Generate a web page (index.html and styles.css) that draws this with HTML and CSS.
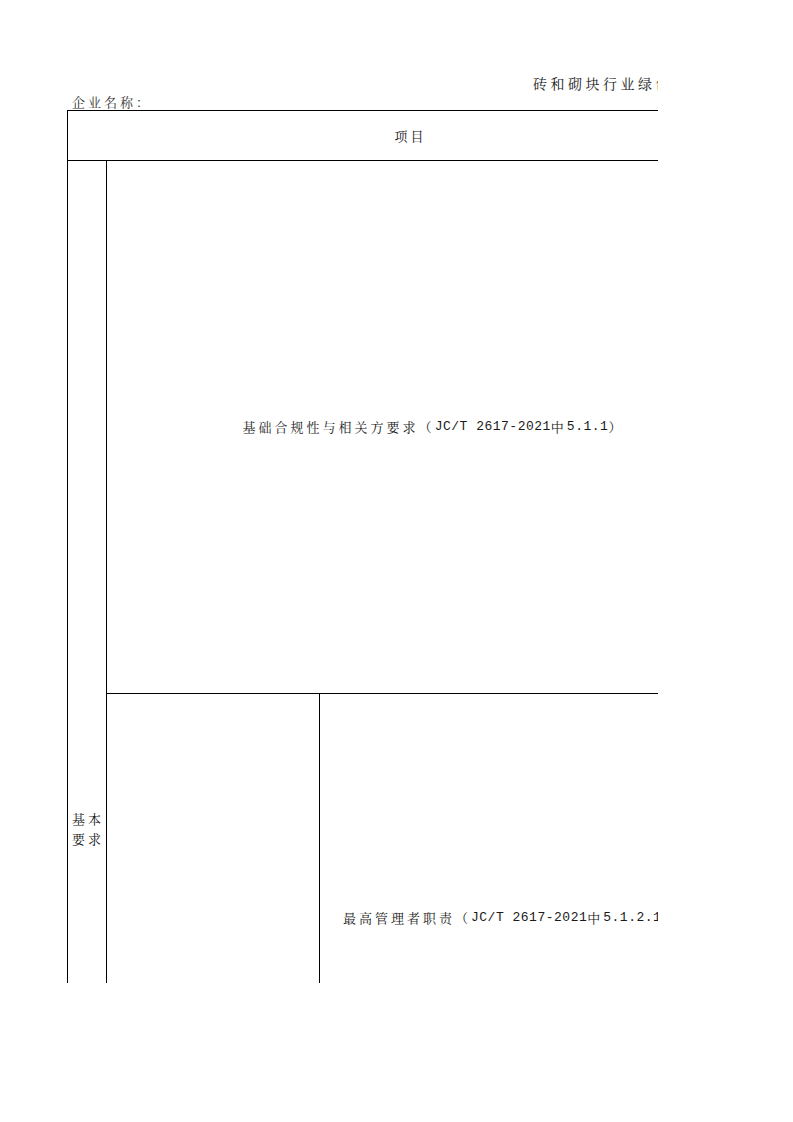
FILE: index.html
```html
<!DOCTYPE html>
<html lang="zh-CN">
<head>
<meta charset="utf-8">
<title>砖和砌块行业绿色工厂评价</title>
<link rel="stylesheet" href="styles.css">
</head>
<body>
<div class="page">
  <div class="title">砖和砌块行业绿色工厂评价要求自评表</div>
  <div class="company">企业名称：</div>
  <div class="sheet">
    <div class="cell head">项目</div>
    <div class="cell side">基本<br>要求</div>
    <div class="cell basic">基础合规性与相关方要求（<span class="lat">JC/T 2617-2021</span>中<span class="lat">5.1.1</span>）</div>
    <div class="cell blank"></div>
    <div class="cell duty">最高管理者职责（<span class="lat">JC/T 2617-2021</span>中<span class="lat">5.1.2.1-5.1.2.2</span>）</div>
    <div class="cell next-a"></div>
    <div class="cell next-b"></div>
  </div>
</div>
</body>
</html>
```

FILE: styles.css
```css
html, body {
  margin: 0;
  padding: 0;
  background: #fff;
}
.page {
  width: 658px;
  height: 983px;
  overflow: hidden;
  padding-top: 73px;
  box-sizing: border-box;
  font-family: "Noto Serif CJK SC", "Noto Sans CJK SC", serif;
  color: #1a1a1a;
  font-size: 13px;
}
.title {
  height: 20px;
  line-height: 20px;
  padding-left: 533px;
  font-size: 14px;
  letter-spacing: 3.5px;
  white-space: nowrap;
}
.company {
  height: 17px;
  line-height: 17px;
  padding-left: 72px;
  letter-spacing: 3px;
  white-space: nowrap;
  color: #333;
}
.sheet {
  margin-left: 67px;
  width: 693px;
  display: grid;
  grid-template-columns: 39px 213px 441px;
  grid-template-rows: 50px 533px 448px 355px;
  border-top: 1px solid #000;
  border-left: 1px solid #000;
  box-sizing: border-box;
}
.cell {
  border-right: 1px solid #000;
  border-bottom: 1px solid #000;
  display: flex;
  align-items: center;
  justify-content: center;
  text-align: center;
  letter-spacing: 3px;
  white-space: nowrap;
  line-height: 20px;
}
.head {
  grid-column: 1 / 4;
  padding-right: 7px;
}
.side {
  grid-column: 1;
  grid-row: 2 / 5;
  white-space: normal;
  padding-left: 2px;
}
.basic {
  grid-column: 2 / 4;
  grid-row: 2;
}
.blank {
  grid-column: 2;
  grid-row: 3;
}
.duty {
  grid-column: 3;
  grid-row: 3;
  justify-content: flex-start;
  padding-left: 23px;
}
.next-a {
  grid-column: 2;
  grid-row: 4;
}
.next-b {
  grid-column: 3;
  grid-row: 4;
}
.lat {
  font-family: "Liberation Mono", "Noto Sans CJK SC", monospace;
  letter-spacing: 0.5px;
}
```
